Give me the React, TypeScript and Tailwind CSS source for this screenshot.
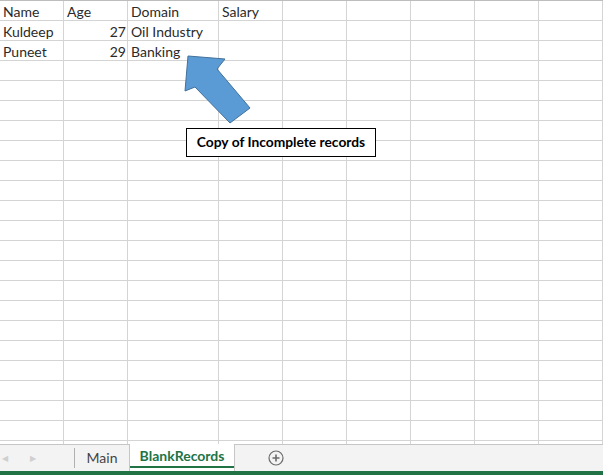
import React from "react";

const cols = [64, 64, 91, 64, 64, 64, 64, 64, 64];
const rows: { c: string[] }[] = [
  { c: ["Name", "Age", "Domain", "Salary"] },
  { c: ["Kuldeep", "27", "Oil Industry", ""] },
  { c: ["Puneet", "29", "Banking", ""] },
];

function Cell({ w, text, right }: { w: number; text?: string; right?: boolean }) {
  return (
    <div
      className={`h-full shrink-0 border-r border-[#d4d4d4] flex items-end pb-[1px] overflow-visible whitespace-nowrap ${right ? "justify-end pr-[1px]" : "pl-[3px]"}`}
      style={{ width: w }}
    >
      {text}
    </div>
  );
}

export default function App() {
  const all = Array.from({ length: 23 }, (_, i) => rows[i]);
  return (
    <div className="relative w-[603px] h-[475px] overflow-hidden bg-white font-['Lato',sans-serif] text-[#2a2a2a]">
      <div className="h-[444px] overflow-hidden border-t border-[#bdbdbd]">
        {all.map((r, i) => (
          <div key={i} className="flex h-[20px] border-b border-[#d4d4d4] text-[14px] leading-none">
            {cols.map((w, j) => (
              <Cell key={j} w={w} text={r?.c[j]} right={i > 0 && j === 1} />
            ))}
          </div>
        ))}
      </div>

      <div className="flex h-[27px] border-t border-[#c6c6c6] bg-[#f3f3f3] text-[14px]">
        <div className="flex w-[74px] items-center gap-[22px] pl-[2px] text-[8px] text-[#cfcfcf]">
          <span>◀</span>
          <span>▶</span>
        </div>
        <div className="my-[3px] w-px bg-[#b0b0b0]" />
        <div className="flex w-[54px] items-center justify-center pb-[2px] text-[#444]">Main</div>
        <div className="-mt-px flex w-[106px] flex-col border-x border-[#c6c6c6] bg-white">
          <div className="flex flex-1 items-center justify-center font-bold text-[#217346]">BlankRecords</div>
          <div className="mb-[3px] h-[2px] bg-[#217346]" />
        </div>
        <div className="flex w-[82px] items-center justify-center pr-[1px]">
          <svg width="16" height="16" viewBox="0 0 16 16">
            <circle cx="8" cy="8" r="7" fill="none" stroke="#6b6b6b" strokeWidth="1.2" />
            <path d="M8 4.5v7M4.5 8h7" stroke="#6b6b6b" strokeWidth="1.6" />
          </svg>
        </div>
      </div>
      <div className="h-[4px] bg-[#217346]" />

      <svg className="absolute left-0 top-0" width="603" height="475">
        <polygon
          points="188,56 225,59 217,69 250,108 230,123 195,87 185,91"
          fill="#5b9bd5"
          stroke="#41719c"
          strokeWidth="1"
        />
      </svg>

      <div className="absolute left-[186px] top-[128px] flex h-[29px] w-[190px] items-center justify-center border border-black bg-white text-[13.8px] font-bold text-black">
        Copy of Incomplete records
      </div>
    </div>
  );
}
